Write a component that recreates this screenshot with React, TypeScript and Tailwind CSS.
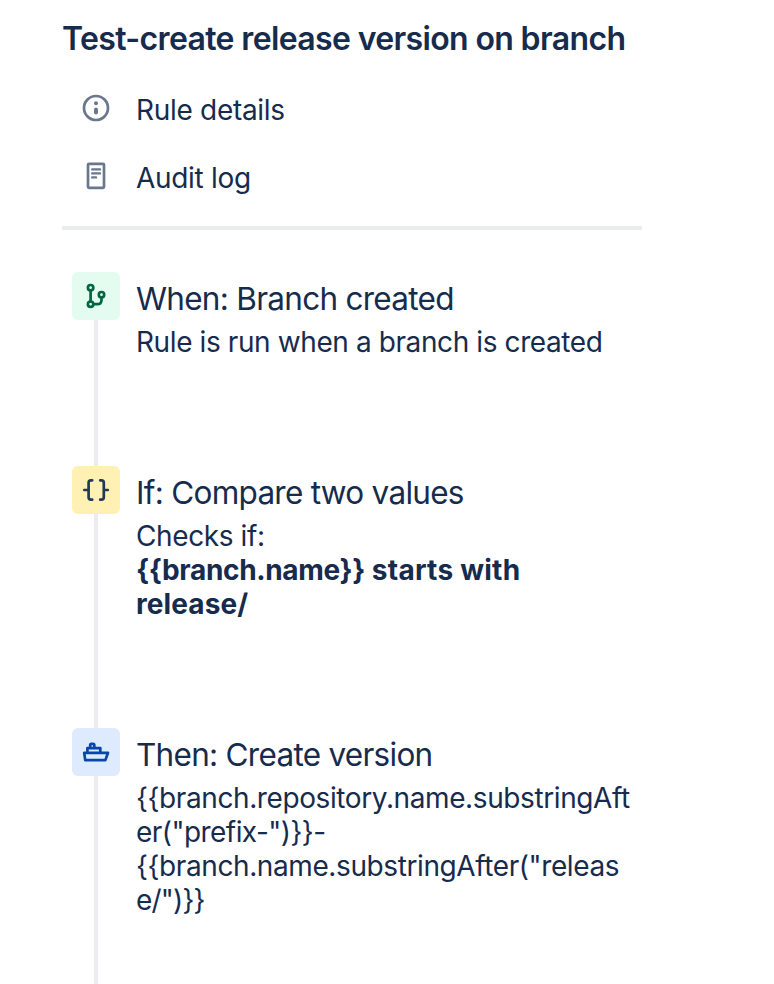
import type { ReactNode } from 'react';

const strokeProps = {
  fill: 'none',
  stroke: 'currentColor',
  strokeWidth: 2.7,
  strokeLinecap: 'round',
  strokeLinejoin: 'round',
} as const;

function InfoIcon() {
  return (
    <svg viewBox="0 0 48 48" className="size-12 shrink-0 text-[#6b778c]" {...strokeProps}>
      <circle cx="24" cy="24" r="12" />
      <circle cx="24" cy="19.3" r="2" fill="currentColor" stroke="none" />
      <path d="M24 25.4v3.2" strokeWidth="4" />
    </svg>
  );
}

function AuditLogIcon() {
  return (
    <svg viewBox="0 0 48 48" className="size-12 shrink-0 text-[#6b778c]" {...strokeProps}>
      <rect x="16" y="11.8" width="16" height="24" rx="1" />
      <path d="M20.2 17.4h7.8M20.2 21.4h7.8M20.2 25.4h3.8" strokeWidth="2.4" />
    </svg>
  );
}

function BranchIcon() {
  return (
    <svg viewBox="0 0 48 48" className="size-12" {...strokeProps}>
      <circle cx="18.6" cy="15.7" r="2.7" />
      <circle cx="18.6" cy="32.2" r="2.7" />
      <circle cx="29.5" cy="22.7" r="2.7" />
      <path d="M18.6 18.4v11.1M21.3 32.2h4q4.2 0 4.2-4.2v-2.6" />
    </svg>
  );
}

function BracesIcon() {
  return (
    <svg viewBox="0 0 48 48" className="size-12" {...strokeProps}>
      <path d="M20.2 14.3h-1.2q-2.4 0-2.4 2.4V31.3q0 2.4 2.4 2.4h1.2M16.6 24h-4.3" />
      <path d="M28.2 14.3h1.2q2.4 0 2.4 2.4V31.3q0 2.4-2.4 2.4h-1.2M31.8 24h4" />
    </svg>
  );
}

function ShipIcon() {
  return (
    <svg viewBox="0 0 48 48" className="size-12" {...strokeProps}>
      <path d="M12.2 24.8h23.8l-2.6 7.3H13.2z" />
      <path d="M15.4 24.5v-4.4h12.9v4.4" />
      <path d="M18.2 19.8v-2.7q0-1.2 1.2-1.2h1.7q1.2 0 1.2 1.2v2.7" />
    </svg>
  );
}

type StepProps = {
  icon: ReactNode;
  tile: string;
  title: string;
  height: string;
  children: ReactNode;
};

function Step({ icon, tile, title, height, children }: StepProps) {
  return (
    <li className={`flex gap-4 ${height}`}>
      <div className="flex w-12 shrink-0 flex-col items-center">
        <div className={`size-12 shrink-0 rounded-[6px] ${tile}`}>{icon}</div>
        <div className="w-1 flex-1 bg-[#ebecf0]" />
      </div>
      <div className="whitespace-nowrap pt-[7px]">
        <h2 className="text-[31.5px] leading-10 tracking-[-0.72px]">{title}</h2>
        <div className="mt-[6px] text-[28px] leading-[34px] tracking-[-0.4px]">{children}</div>
      </div>
    </li>
  );
}

export default function App() {
  return (
    <main className="h-[984px] w-[774px] overflow-hidden bg-white pl-[62px] font-['Inter',sans-serif] text-[#172b4d]">
      <h1 className="whitespace-nowrap pt-[19px] text-[32px] font-semibold leading-10 tracking-[-0.64px]">
        Test-create release version on branch
      </h1>
      <nav className="mt-[25px] flex w-[580px] flex-col gap-5 border-b-4 border-[#ebecf0] pb-[26px] pl-[10px] text-[28px] leading-[52px] tracking-[-0.3px]">
        <a className="flex h-12 gap-4">
          <InfoIcon />
          <span>Rule details</span>
        </a>
        <a className="flex h-12 gap-4">
          <AuditLogIcon />
          <span>Audit log</span>
        </a>
      </nav>
      <ol className="mt-[42px] pl-[10px]">
        <Step icon={<BranchIcon />} tile="bg-[#e3fcef] text-[#006644]" title="When: Branch created" height="h-[194px]">
          <p>Rule is run when a branch is created</p>
        </Step>
        <Step icon={<BracesIcon />} tile="bg-[#fff0b3] text-[#253858]" title="If: Compare two values" height="h-[262px]">
          <p>Checks if:</p>
          <p className="font-bold tracking-[0.25px]">
            <span className="tracking-[-0.35px]">{'{{branch.name}}'}</span> starts with
            <br />
            <span className="tracking-[0.1px]">release/</span>
          </p>
        </Step>
        <Step icon={<ShipIcon />} tile="bg-[#deebff] text-[#0747a6]" title="Then: Create version" height="h-[256px]">
          <p>
            {'{{branch.repository.name.substringAft'}
            <br />
            <span className="tracking-[-0.55px]">{'er("prefix-")}}-'}</span>
            <br />
            {'{{branch.name.substringAfter("releas'}
            <br />
            <span className="tracking-[-0.8px]">{'e/")}}'}</span>
          </p>
        </Step>
      </ol>
    </main>
  );
}
